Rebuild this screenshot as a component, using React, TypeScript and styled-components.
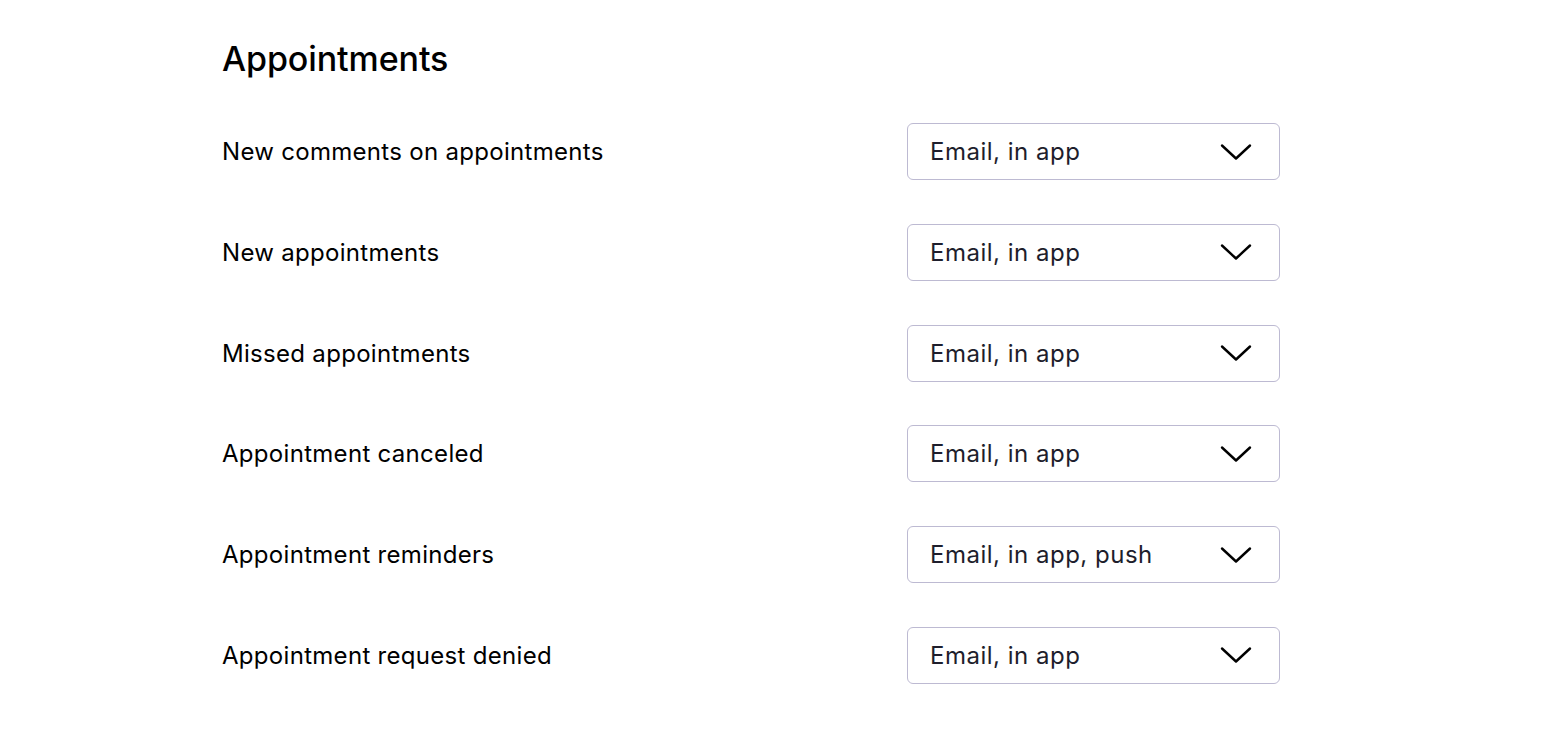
import styled, { createGlobalStyle } from 'styled-components';

const GlobalStyle = createGlobalStyle`
	body {
		margin: 0;
		background: #ffffff;
		font-family: Inter, 'Noto Sans', sans-serif;
	}
`;

const ROWS = [
	{ label: 'New comments on appointments', value: 'Email, in app' },
	{ label: 'New appointments', value: 'Email, in app' },
	{ label: 'Missed appointments', value: 'Email, in app' },
	{ label: 'Appointment canceled', value: 'Email, in app' },
	{ label: 'Appointment reminders', value: 'Email, in app, push' },
	{ label: 'Appointment request denied', value: 'Email, in app' },
];

const Chevron = () => (
	<svg width="32" height="18" viewBox="0 0 32 18" fill="none">
		<path
			d="M2 2.5L16 15.5L30 2.5"
			stroke="#000"
			strokeWidth="2.4"
			strokeLinecap="round"
			strokeLinejoin="round"
		/>
	</svg>
);

const App = () => {
	return (
		<>
			<GlobalStyle />
			<Container>
				<Heading>Appointments</Heading>
				<List>
					{ROWS.map((row) => (
						<Row key={row.label}>
							<Label>{row.label}</Label>
							<Select type="button">
								<Value>{row.value}</Value>
								<Chevron />
							</Select>
						</Row>
					))}
				</List>
			</Container>
		</>
	);
};

const Container = styled.section`
	width: 1058px;
	padding: 37px 0 0 222px;
`;

const Heading = styled.h2`
	margin: 0 0 42px;
	font-size: 34px;
	font-weight: 500;
	line-height: 44px;
	color: #000;
	letter-spacing: -0.1px;
`;

const List = styled.div`
	display: flex;
	flex-direction: column;
	gap: 43.8px;
`;

const Row = styled.div`
	display: flex;
	justify-content: space-between;
	align-items: center;
`;

const Label = styled.span`
	font-size: 24px;
	letter-spacing: 0.3px;
	color: #000;
`;

const Select = styled.button`
	width: 373px;
	height: 57px;
	box-sizing: border-box;
	display: flex;
	align-items: center;
	justify-content: space-between;
	padding: 0 27px 0 22px;
	background: #fff;
	border: 1px solid #bdbad2;
	border-radius: 6px;
	font-family: inherit;
	cursor: pointer;
`;

const Value = styled.span`
	font-size: 24px;
	letter-spacing: 0.5px;
	color: #1e1e2c;
`;

export default App;
